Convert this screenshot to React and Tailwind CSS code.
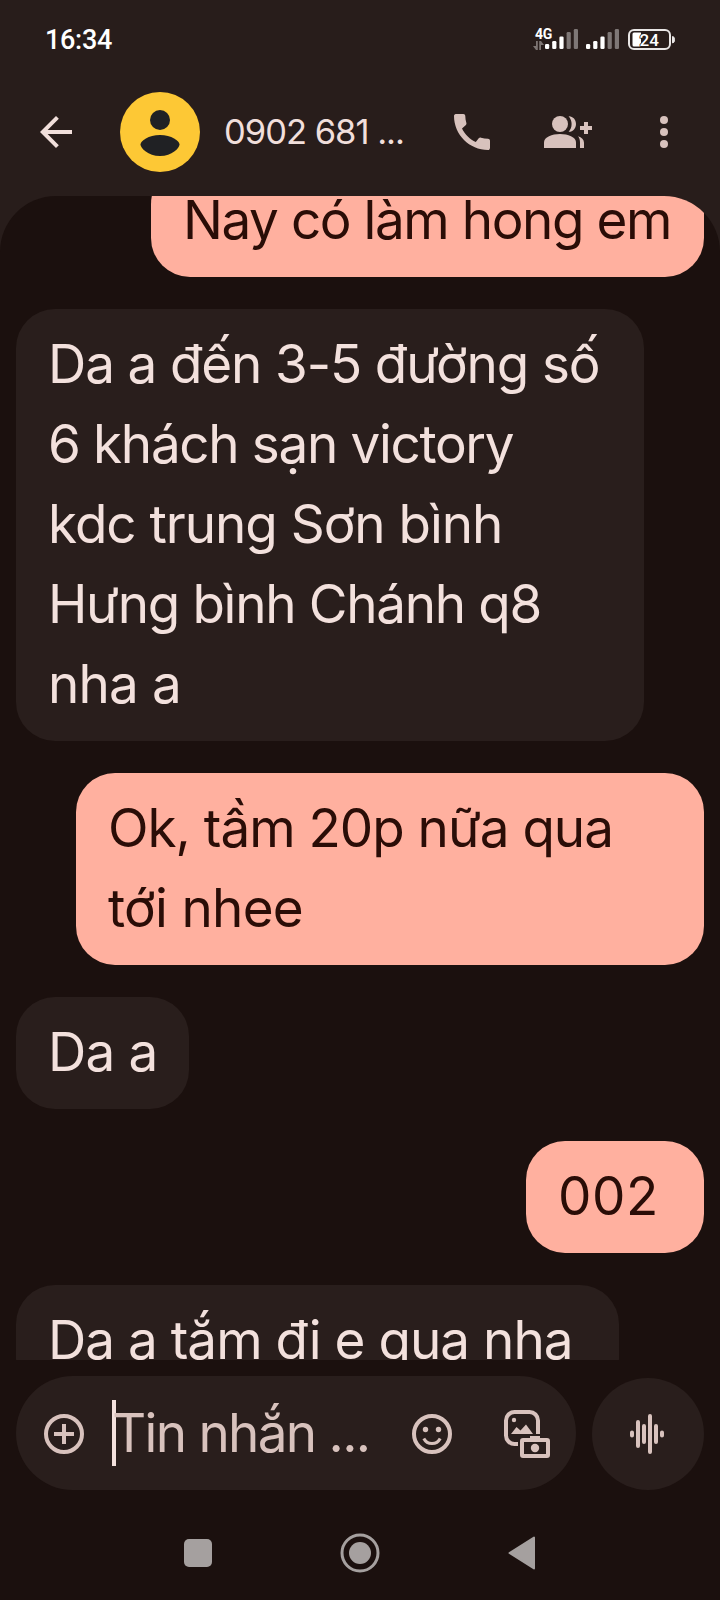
import clsx from 'clsx';

const messages = [
    {
        from: "me",
        box: "w-[553px] -mt-[31px]",
        lines: [{ text: "Nay có làm hong em", tracking: "tracking-[-1.43px]" }]
    },
    {
        from: "them",
        box: "w-[628px]",
        lines: [
            { text: "Da a đến 3-5 đường số", tracking: "tracking-[-1.12px]" },
            { text: "6 khách sạn victory", tracking: "tracking-[-1.33px]" },
            { text: "kdc trung Sơn bình", tracking: "tracking-[-1.02px]" },
            { text: "Hưng bình Chánh q8", tracking: "tracking-[-1.3px]" },
            { text: "nha a", tracking: "tracking-[-0.8px]" }
        ]
    },
    {
        from: "me",
        box: "w-[628px]",
        lines: [
            { text: "Ok, tầm 20p nữa qua", tracking: "tracking-[-1px]" },
            { text: "tới nhee", tracking: "tracking-[-0.7px]" }
        ]
    },
    {
        from: "them",
        box: "w-[173px]",
        lines: [{ text: "Da a", tracking: "tracking-[-0.8px]" }]
    },
    {
        from: "me",
        box: "w-[178px]",
        lines: [{ text: "002", tracking: "tracking-[0.6px]" }]
    },
    {
        from: "them",
        box: "w-[603px]",
        lines: [{ text: "Da a tắm đi e qua nha", tracking: "tracking-[-0.97px]" }]
    }
];

const signalBars = [
    { y: 15, height: 5 },
    { y: 12, height: 8 },
    { y: 7.5, height: 12.5 },
    { y: 3, height: 17 },
    { y: 0, height: 20 }
];

function Signal() {
    return (
        <svg width="33" height="20" viewBox="0 0 33 20" fill="#fff">
            {signalBars.map((bar, i) => (
                <rect key={i} x={i * 7.2} y={bar.y} width="4.2" height={bar.height} rx="1.3" opacity={i > 2 ? 0.4 : 1} />
            ))}
        </svg>
    );
}

function StatusBar() {
    return (
        <div className="flex h-[76px] items-center justify-between pl-[45px] pr-[45px] pt-[2px] text-white font-[Roboto,sans-serif]">
            <span className="text-[27px] leading-none font-medium tracking-[-0.3px] pt-[2px]">16:34</span>
            <div className="flex items-center">
                <div className="flex w-[20px] flex-col items-start -mr-[8px] h-[25px]">
                    <span className="pl-[2px] text-[14px] leading-[14px] font-bold tracking-[-0.4px]">4G</span>
                    <svg width="11" height="9" viewBox="0 0 11 9" fill="#7d7573">
                        <path d="M3 0h1.800v9H3L0 5h3zM6.200 0H8l3 4H8v5H6.200z" />
                    </svg>
                </div>
                <Signal />
                <div className="w-[8px]" />
                <Signal />
                <div className="w-[9px]" />
                <svg width="47" height="21" viewBox="0 0 47 21">
                    <rect x="1" y="1" width="41" height="19" rx="5" fill="none" stroke="#e9e6e5" strokeWidth="2" />
                    <path d="M6 3.500h7v14H6a1.500 1.500 0 0 1-1.500-1.500V5A1.500 1.500 0 0 1 6 3.500z" fill="#fff" />
                    <path d="M44.500 7.500a2 3.200 0 0 1 0 6.400z" fill="#e9e6e5" stroke="#e9e6e5" />
                    <text x="11.500" y="16.500" fontSize="17" fontWeight="500" fill="#fff" stroke="#281d1b" strokeWidth="1.500" paintOrder="stroke">24</text>
                </svg>
            </div>
        </div>
    );
}

function Toolbar() {
    return (
        <div className="flex h-[112px] items-center px-8 text-[#d8c2bd]">
            <svg width="48" height="48" viewBox="0 0 24 24" fill="#f1dfdb">
                <path d="M20 11H7.830l5.590-5.590L12 4l-8 8 8 8 1.410-1.410L7.830 13H20v-2z" />
            </svg>
            <div className="ml-10 size-20 rounded-full bg-[#fdc835]">
                <svg width="80" height="80" viewBox="0 0 80 80" fill="#202124">
                    <circle cx="40" cy="28" r="10" />
                    <path d="M20.500 52.500c0-3.500 8-9.500 19.500-9.500s19.500 6 19.500 9.500S52 64 40 64 20.500 56 20.500 52.500z" />
                </svg>
            </div>
            <h1 className="flex-1 pl-[24px] text-[34.5px] leading-none tracking-[-1px] text-[#f1dfdb] whitespace-nowrap">0902 681 ...</h1>
            <svg width="48" height="48" viewBox="0 0 24 24" fill="currentColor">
                <path d="M20.010 15.380c-1.230 0-2.420-.2-3.530-.56-.35-.12-.74-.03-1.010.24l-1.570 1.970c-2.830-1.350-5.480-3.900-6.890-6.830l1.950-1.660c.27-.28.35-.67.24-1.020-.37-1.110-.56-2.300-.56-3.530 0-.54-.45-.99-.99-.99H4.190C3.650 3 3 3.240 3 3.990 3 13.280 10.730 21 20.010 21c.71 0 .99-.63.99-1.180v-3.450c0-.54-.45-.99-.99-.99z" />
            </svg>
            <svg className="ml-12" width="48" height="48" viewBox="0 0 48 48" fill="currentColor">
                <circle cx="16" cy="16" r="8" />
                <path d="M0 40v-5.500C0 29 8 26 16 26s16 3 16 8.500V40z" />
                <path d="M24.600 8.200C29 8 32 11.800 32 16s-3 8-7.400 7.800C26.600 21.500 27.600 19 27.600 16s-1-5.500-3-7.800zM34 28.300c3.700 1.200 6 3.400 6 6.500V40h-4v-5.500c0-2.500-.6-4.600-2-6.200z" />
                <path d="M40 14h4v4h4v4h-4v4h-4v-4h-4v-4h4z" />
            </svg>
            <svg className="ml-12" width="48" height="48" viewBox="0 0 24 24" fill="currentColor">
                <circle cx="12" cy="6" r="2" />
                <circle cx="12" cy="12" r="2" />
                <circle cx="12" cy="18" r="2" />
            </svg>
        </div>
    );
}

function Bubble({ message }) {
    const mine = message.from === "me";

    return (
        <div
            className={clsx(
                "shrink-0 rounded-[39px] px-8 pt-[15px] pb-[17px] text-[53px] leading-[80px] whitespace-nowrap",
                mine ? "self-end bg-[#ffb09f] text-[#2a0d07]" : "self-start bg-[#291e1c] text-[#f3e1dd]",
                message.box
            )}
        >
            {message.lines.map((line) => (
                <p key={line.text} className={line.tracking}>{line.text}</p>
            ))}
        </div>
    );
}

function Composer() {
    return (
        <div className="flex items-end justify-between px-4 pt-4 text-[#d8c2bd]">
            <div className="flex h-[114px] w-[560px] items-center rounded-full bg-[#291e1c] px-6">
                <svg width="48" height="48" viewBox="0 0 48 48" fill="none" stroke="currentColor" strokeWidth="4">
                    <circle cx="24" cy="25" r="18" />
                    <path d="M24 15v20M14 25h20" />
                </svg>
                <div className="ml-6 h-[66px] w-1 bg-[#f3e1dd]" />
                <span className="-ml-[4px] flex-1 text-[53px] leading-[66px] tracking-[-1.7px] whitespace-nowrap">Tin nhắn ...</span>
                <svg width="48" height="48" viewBox="0 0 48 48" fill="none" stroke="currentColor" strokeWidth="4">
                    <circle cx="24" cy="25" r="18" />
                    <path d="M15.800 29.500a9.200 9.200 0 0 0 16.400 0" strokeWidth="3" />
                    <g fill="currentColor" stroke="none">
                        <circle cx="17.500" cy="20.500" r="2.700" />
                        <circle cx="30.500" cy="20.500" r="2.700" />
                    </g>
                </svg>
                <svg className="ml-[44px]" width="52" height="52" viewBox="0 0 52 52" fill="none" stroke="currentColor" strokeWidth="4">
                    <path d="M18 37h-3.500A8.500 8.500 0 0 1 6 28.500v-15A8.500 8.500 0 0 1 14.500 5h15a8.500 8.500 0 0 1 8.500 8.500V27" />
                    <rect x="22" y="33" width="26" height="16" rx="1" strokeLinejoin="round" />
                    <path d="M30 29h10v4H30zM11 27l5.500-7 4 3.500L26 17.500 33 27z" fill="currentColor" stroke="none" />
                    <circle cx="14" cy="13" r="2.200" fill="currentColor" stroke="none" />
                    <circle cx="35" cy="41" r="4.200" fill="currentColor" stroke="none" />
                </svg>
            </div>
            <div className="flex size-[112px] items-center justify-center rounded-full bg-[#291e1c]">
                <svg width="48" height="48" viewBox="0 0 48 48" stroke="currentColor" strokeWidth="4" strokeLinecap="round">
                    <path d="M8 22.500v3M14 12v24M20 16v16M26 6v36M32 16v16M38 22.500v3" />
                </svg>
            </div>
        </div>
    );
}

function NavBar() {
    return (
        <div className="flex h-[110px] items-center justify-between pl-[184px] pr-[185px] pt-[16px]">
            <div className="size-7 rounded-[5px] bg-[#a5a09f]" />
            <svg width="40" height="40" viewBox="0 0 40 40">
                <circle cx="20" cy="20" r="18" fill="none" stroke="#a5a09f" strokeWidth="3" />
                <circle cx="20" cy="20" r="11" fill="#a5a09f" />
            </svg>
            <svg width="27" height="34" viewBox="0 0 27 34" fill="#a5a09f" stroke="#a5a09f" strokeWidth="2" strokeLinejoin="round">
                <path d="M1.500 17L26 1.500v31z" />
            </svg>
        </div>
    );
}

export default function App() {
    return (
        <div className="flex h-[1600px] w-[720px] flex-col overflow-hidden bg-[#1b100e] font-[Inter,sans-serif]">
            <div className="bg-[#281d1b] pb-2">
                <StatusBar />
                <Toolbar />
            </div>
            <div className="bg-[linear-gradient(#281d1b_60px,#1b100e_60px)]">
                <main className="flex h-[1164px] flex-col gap-8 overflow-hidden rounded-t-[56px] bg-[#1b100e] px-4">
                    {messages.map((message) => (
                        <Bubble key={message.lines[0].text} message={message} />
                    ))}
                </main>
            </div>
            <Composer />
            <NavBar />
        </div>
    );
}
